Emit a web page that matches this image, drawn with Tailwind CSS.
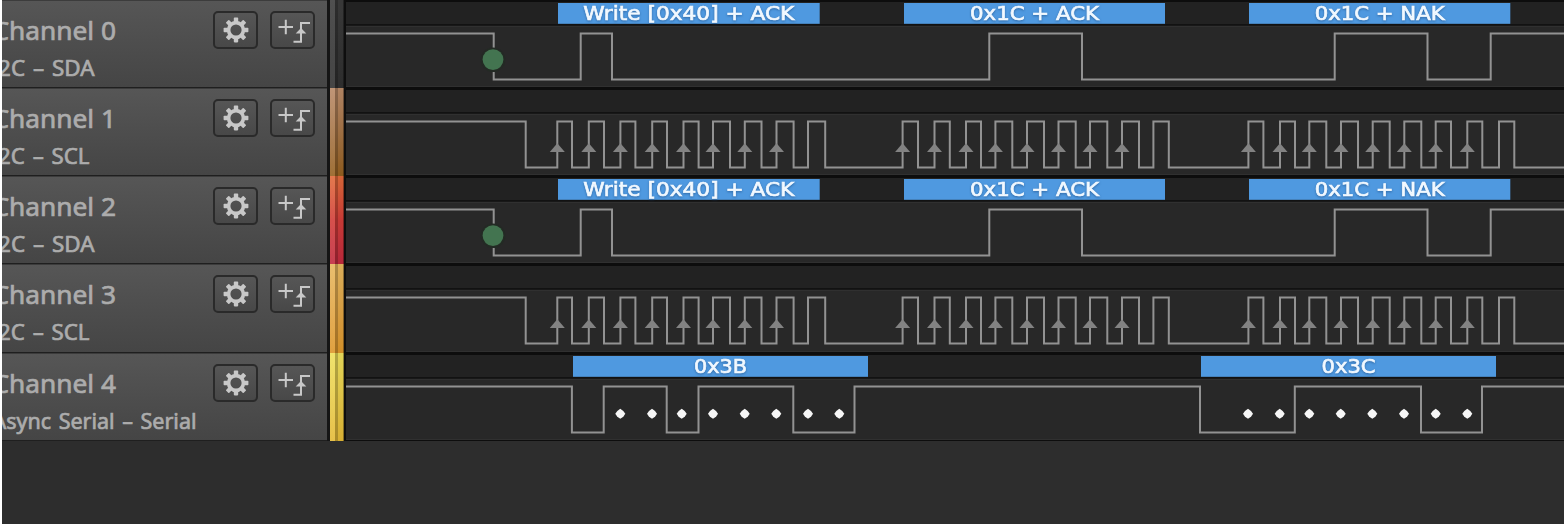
<!DOCTYPE html>
<html lang="en">
<head>
<meta charset="utf-8">
<title>Logic analyzer</title>
<script src="https://cdn.jsdelivr.net/npm/@tailwindcss/browser@4"></script>
</head>
<body class="h-[524px] w-[1564px] overflow-hidden bg-white pl-[2px]">
<main id="rows" class="flex h-[524px] flex-col overflow-hidden bg-[#2d2d2d]"></main>
<script>
const I2C_LABELS = [[558, 819.7, 'Write [0x40] + ACK', 211], [904, 1165, '0x1C + ACK', 129], [1249, 1510.3, '0x1C + NAK', 130]];
const SDA = { start: 345, edges: [493.7, 580.7, 612, 989.3, 1082, 1334.7, 1427.5, 1490.7], labels: I2C_LABELS, marker: true };
const CLOCKS = [
  557.3,572,588.8,604,620.4,635.4,652.2,667,683.5,698.6,713,730,744.8,761.5,776.5,793.6,808,825.2,
  902.6,918,934.5,949.8,966,981,995.4,1012.3,1027,1044,1058.5,1075.7,1090,1107.3,1122,1139,1153.4,1168.8,
  1248.4,1263.4,1280,1295,1309.3,1326.3,1341,1358,1372.7,1389.7,1404.3,1421.3,1435.7,1451,1467.3,1482.3,1499,1514.3];
const SCL = { start: 345, edges: [525.7, ...CLOCKS], labels: [], arrows: CLOCKS.filter((_, i) => i % 2 === 0 && i % 18 !== 16) };
const SERIAL = { start: 345, edges: [571.9,603.7,666.7,698.5,793.3,854.5,1200,1294.8,1421,1482],
  labels: [[573, 868, '0x3B', 53], [1201, 1496, '0x3C', 54]],
  dots: [620.3,652,681.7,713,744.7,776.3,808,839.3,1248,1279.7,1309.3,1340.7,1372.3,1404,1435.7,1467.3] };

const CHANNELS = [
  { name: 'Channel 0', sub: 'I2C – SDA', ss: 94.5, w: SDA, h: 'h-[88px]', strip: 'from-[#3c3c3c] to-[#303030]' },
  { name: 'Channel 1', sub: 'I2C – SCL', ss: 89.5, w: SCL, h: 'h-[88px]', strip: 'from-[#b98a68] to-[#94601f]' },
  { name: 'Channel 2', sub: 'I2C – SDA', ss: 94.5, w: SDA, h: 'h-[88px]', strip: 'from-[#e06a3a] via-[#d13d38] to-[#c02a3e]' },
  { name: 'Channel 3', sub: 'I2C – SCL', ss: 89.5, w: SCL, h: 'h-[89px]', strip: 'from-[#e6b75e] to-[#dd962a]' },
  { name: 'Channel 4', sub: 'Async Serial – Serial', w: SERIAL, h: 'h-[88px]', strip: 'from-[#eee05c] to-[#e3b936]' },
];

let teeth = '';
for (let k = 0; k < 8; k++) teeth += `<rect x="-2.2" y="-12.4" width="4.4" height="5" rx="0.8" transform="rotate(${k * 45})"/>`;
const GEAR = `<svg class="size-[28px]" viewBox="-14 -14 28 28" fill="#c8c8c8"><circle r="7.4" fill="none" stroke="#c8c8c8" stroke-width="3.6"/>${teeth}</svg>`;
const TRIGGER = `<svg class="h-[28px] w-[36px]" viewBox="0 0 36 28" fill="none" stroke="#c8c8c8" stroke-width="2"><path d="M3.5 11H18M10.8 3.7V18.3M35 7H26V25.7H18.5"/><path d="M26 12L31.3 17.6H20.7Z" fill="#c8c8c8" stroke="none"/></svg>`;
const BUTTON = 'flex h-[38px] w-[45px] items-center justify-center rounded-[5px] border-2 border-[#2a2a2a] bg-linear-to-b from-[#565656] to-[#484848]';

function wave(w, height) {
  const hi = 33.4, lo = 79.5;
  let d = `M${w.start} ${hi}`, level = hi;
  for (const x of w.edges) { level = level === hi ? lo : hi; d += `H${x}V${level}`; }
  d += 'H1564';
  let s = `<rect x="346" y="0" width="1218" height="${height}" fill="#282828"/>
    <rect x="346" y="2" width="1218" height="22" fill="#222222"/>
    <rect x="346" y="0" width="1218" height="2" fill="#0d0d0d"/>
    <rect x="346" y="24" width="1218" height="1.7" fill="#121212"/>
    <rect x="346" y="26" width="1218" height="1" fill="#303030"/>
    <rect x="346" y="${height - 2}" width="1218" height="1" fill="#303030"/>
    <rect x="346" y="${height - 1}" width="1218" height="1" fill="#0d0d0d"/>`;
  for (const [a, b, t, len] of w.labels)
    s += `<rect x="${a}" y="3" width="${b - a}" height="20.8" fill="#4f99e0"/>
      <text x="${(a + b) / 2}" y="20" text-anchor="middle" textLength="${len}" lengthAdjust="spacingAndGlyphs" fill="#f2f9ff" stroke="#f2f9ff" stroke-width=".7" font-size="20" class="drop-shadow-[0_1px_1px_rgba(20,60,110,0.5)]">${t}</text>`;
  s += `<path d="${d}" fill="none" stroke="#929292" stroke-width="2"/>`;
  for (const x of w.arrows || []) s += `<path d="M${x} 55.2L${x + 7.5} 64H${x - 7.5}Z" fill="#828282"/>`;
  for (const x of w.dots || []) s += `<path d="M${x - 5} 60.8L${x - 3} 57.9L${x} 55.8L${x + 3} 57.9L${x + 5} 60.8L${x + 3} 63.7L${x} 65.8L${x - 3} 63.7Z" fill="#f6f6f6"/>`;
  if (w.marker) s += `<circle cx="493" cy="59.7" r="12.3" fill="#232a24"/><circle cx="493" cy="59.6" r="10.4" fill="#437450"/>`;
  return `<svg class="w-[1218px] shrink-0 ${height === 89 ? 'h-[89px]' : 'h-[88px]'} font-['DejaVu_Sans',sans-serif]" viewBox="346 0 1218 ${height}">${s}</svg>`;
}

function label(c) {
  const serial = c.w === SERIAL;
  return `<svg class="h-[88px] w-[208px] shrink-0 font-['Noto_Sans',sans-serif]" viewBox="2 0 208 88" fill="#acacac" stroke="#acacac" stroke-width=".7">
    <text x="116" y="39.2" text-anchor="end" textLength="123.5" lengthAdjust="spacingAndGlyphs" font-size="25.5">${c.name}</text>
    <text x="${serial ? 196.5 : c.ss}" y="75" text-anchor="end" textLength="${serial ? 204 : c.ss + 9.5}" lengthAdjust="spacingAndGlyphs" font-size="22" class="[word-spacing:2px]">${c.sub}</text></svg>`;
}

document.getElementById('rows').innerHTML = CHANNELS.map(c => {
  const height = c.h === 'h-[89px]' ? 89 : 88;
  return `<section class="flex shrink-0 bg-[#151515] ${c.h}">
    <div class="flex w-[325px] overflow-hidden border-t border-b border-t-[#3c3c3c] border-b-[#1f1f1f] bg-linear-to-b from-[#565656] to-[#454545]">
      ${label(c)}
      <div class="flex gap-3 pt-[10px] pl-[3px]">
        <div class="${BUTTON}">${GEAR}</div>
        <div class="${BUTTON}">${TRIGGER}</div>
      </div>
    </div>
    <div class="ml-[3px] flex w-[14px] bg-linear-to-b ${c.strip}">
      <div class="w-[5px] bg-white/10"></div><div class="w-[3px] bg-black/25"></div><div class="w-[5px] bg-black/5"></div><div class="w-px bg-black/40"></div>
    </div>
    <div class="w-[2px] shrink-0 bg-[#0e0e0e]"></div>
    ${wave(c.w, height)}
  </section>`;
}).join('');
</script>
</body>
</html>
